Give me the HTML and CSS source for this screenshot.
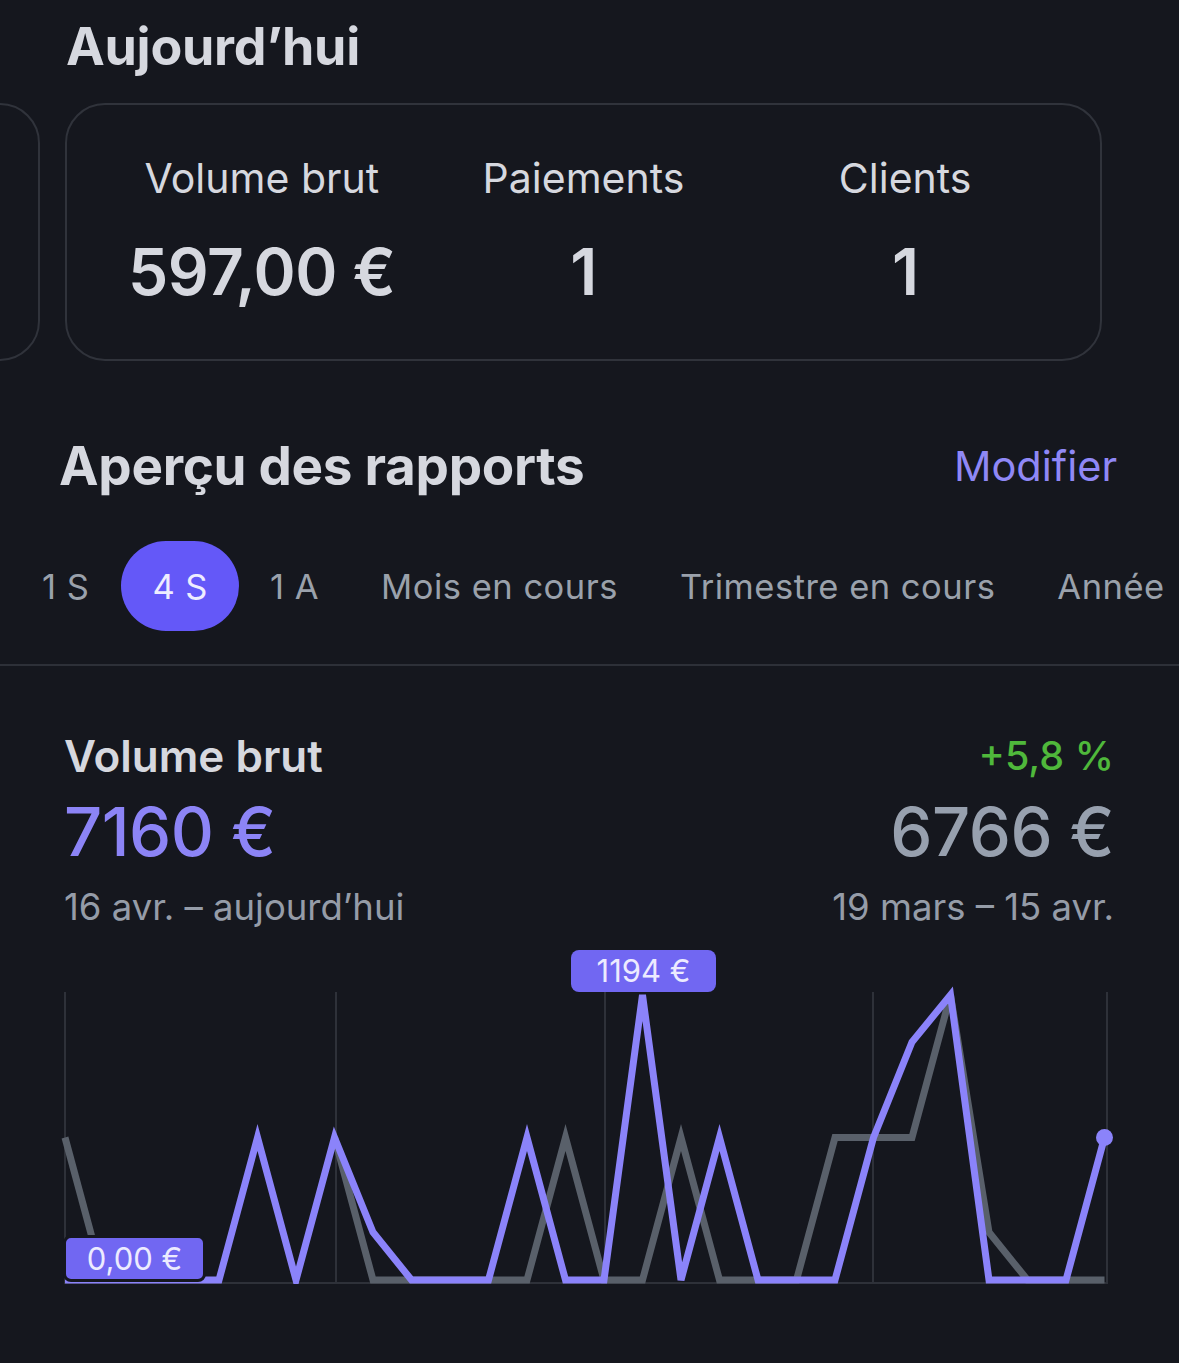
FILE: index.html
```html
<!DOCTYPE html>
<html lang="fr">
<head>
    <meta charset="UTF-8">
    <meta name="viewport" content="width=device-width, initial-scale=1.0">
    <title>Accueil</title>
    <link rel="stylesheet" href="styles.css">
</head>
<body>
    <div class="app">
        <h1 class="title today-title">Aujourd’hui</h1>

        <div class="cards">
            <div class="card card-peek"></div>
            <div class="card card-today">
                <div class="stat">
                    <p class="stat-label">Volume brut</p>
                    <p class="stat-value">597,00 €</p>
                </div>
                <div class="stat">
                    <p class="stat-label">Paiements</p>
                    <p class="stat-value">1</p>
                </div>
                <div class="stat">
                    <p class="stat-label">Clients</p>
                    <p class="stat-value">1</p>
                </div>
            </div>
        </div>

        <div class="reports-head">
            <h2 class="title">Aperçu des rapports</h2>
            <a class="edit-link">Modifier</a>
        </div>

        <div class="tabs">
            <button class="tab">1 S</button>
            <button class="tab active">4 S</button>
            <button class="tab">1 A</button>
            <button class="tab">Mois en cours</button>
            <button class="tab">Trimestre en cours</button>
            <button class="tab">Année</button>
        </div>

        <hr class="divider">

        <div class="report">
            <div class="report-row">
                <span class="report-name">Volume brut</span>
                <span class="report-delta">+5,8 %</span>
            </div>
            <div class="report-row">
                <span class="report-now">7160 €</span>
                <span class="report-prev">6766 €</span>
            </div>
            <div class="report-row">
                <span class="report-range">16 avr. – aujourd’hui</span>
                <span class="report-range">19 mars – 15 avr.</span>
            </div>
        </div>

        <div class="chart">
            <svg class="chart-svg" width="1179" height="360" viewBox="0 0 1179 360">
                <defs>
                    <clipPath id="plot-clip">
                        <rect x="0" y="0" width="1179" height="344"></rect>
                    </clipPath>
                </defs>
                <g class="grid">
                    <line x1="65" y1="52" x2="65" y2="344"></line>
                    <line x1="336" y1="52" x2="336" y2="344"></line>
                    <line x1="605" y1="52" x2="605" y2="344"></line>
                    <line x1="873" y1="52" x2="873" y2="344"></line>
                    <line x1="1107" y1="52" x2="1107" y2="344"></line>
                    <line x1="65" y1="343" x2="1107" y2="343"></line>
                </g>
                <g id="prev-lines" class="line-prev" clip-path="url(#plot-clip)"></g>
                <g id="now-lines" class="line-now" clip-path="url(#plot-clip)"></g>
                <circle id="now-dot" class="dot-now" r="8.5" cx="0" cy="0"></circle>
            </svg>
            <span class="badge badge-max">1194 €</span>
            <span class="badge badge-min">0,00 €</span>
        </div>
    </div>

    <script>
        // daily values over 4 weeks (max 1194), null = no data
        const nowValues = [0,0,0,0,0,597,0,597,200,0,0,0,597,0,0,1194,0,597,0,0,0,597,997,1194,0,0,0,597];
        const prevValues = [597,0,null,null,null,null,null,597,0,0,0,0,0,597,0,0,597,0,0,0,597,597,597,1194,200,0,0,0];

        const startX = 65, stepX = 38.5, baseY = 340, topY = 55, maxValue = 1194;
        const svgNS = "http://www.w3.org/2000/svg";

        function yFor(v) {
            return baseY - (v / maxValue) * (baseY - topY);
        }

        function drawLine(groupId, values) {
            const group = document.getElementById(groupId);
            let points = [];
            const flush = () => {
                if (points.length > 1) {
                    const line = document.createElementNS(svgNS, "polyline");
                    line.setAttribute("points", points.join(" "));
                    group.appendChild(line);
                }
                points = [];
            };
            values.forEach((v, i) => {
                if (v === null) {
                    flush();
                    return;
                }
                points.push((startX + i * stepX).toFixed(1) + "," + yFor(v).toFixed(1));
            });
            flush();
        }

        drawLine("prev-lines", prevValues);
        drawLine("now-lines", nowValues);

        const last = nowValues.length - 1;
        const dot = document.getElementById("now-dot");
        dot.setAttribute("cx", startX + last * stepX);
        dot.setAttribute("cy", yFor(nowValues[last]));
    </script>
</body>
</html>
```

FILE: styles.css
```css
*{
    margin: 0;
    padding: 0;
    box-sizing: border-box;
    font-family: Inter, "Noto Sans", sans-serif;
}
body{
    width: 100%;
    height: 100vh;
    overflow: hidden;
    background: #15171e;
    color: #d6d8df;
}
.app{
    width: 1179px;
}
.title{
    font-size: 53px;
    font-weight: 700;
    line-height: 60px;
    color: #d6d8df;
    letter-spacing: -0.3px;
}
.today-title{
    margin-top: 17px;
    padding-left: 66px;
    font-size: 52px;
}
.cards{
    display: flex;
    gap: 25px;
    margin-top: 26px;
}
.card{
    height: 258px;
    border: 2px solid #30333b;
    border-radius: 40px;
}
.card-peek{
    width: 80px;
    margin-left: -40px;
}
.card-today{
    width: 1037px;
    display: grid;
    grid-template-columns: repeat(3, 1fr);
    padding: 49px 34px 0;
}
.stat{
    text-align: center;
}
.stat-label{
    font-size: 41px;
    line-height: 48px;
    color: #d6d8df;
}
.stat-value{
    margin-top: 34px;
    font-size: 64px;
    line-height: 72px;
    font-weight: 600;
    color: #d6d8df;
    letter-spacing: -0.5px;
}
.reports-head{
    display: flex;
    justify-content: space-between;
    align-items: center;
    margin-top: 75px;
    padding: 0 62px 0 59px;
}
.edit-link{
    font-size: 41.5px;
    line-height: 60px;
    color: #8f88f6;
}
.tabs{
    display: flex;
    margin-top: 45px;
    padding-left: 11px;
    white-space: nowrap;
}
.tab{
    height: 90px;
    padding: 0 31px;
    border: none;
    border-radius: 45px;
    background: none;
    font-size: 34.5px;
    color: #9aa1ab;
    letter-spacing: 0.5px;
}
.tab.active{
    margin-left: 1px;
    background: #6458f8;
    color: #eeedff;
}
.divider{
    margin-top: 33px;
    border: none;
    height: 2px;
    background: #2d3038;
}
.report{
    margin-top: 65px;
    padding: 0 65px 0 64px;
}
.report-row{
    display: flex;
    justify-content: space-between;
    align-items: center;
}
.report-name{
    font-size: 44px;
    font-weight: 600;
    line-height: 50px;
    color: #d6d8df;
}
.report-delta{
    font-size: 39.5px;
    font-weight: 500;
    line-height: 50px;
    color: #4fb83b;
}
.report-now,
.report-prev{
    margin-top: 15px;
    font-size: 67px;
    font-weight: 500;
    line-height: 72px;
    letter-spacing: -0.5px;
}
.report-now{
    color: #8c84f6;
}
.report-prev{
    color: #97a0ae;
}
.report-range{
    margin-top: 17px;
    font-size: 36.5px;
    line-height: 44px;
    color: #959ca8;
}
.chart{
    position: relative;
    margin-top: 11px;
    height: 360px;
}
.chart-svg{
    display: block;
}
.grid line{
    stroke: #2e3139;
    stroke-width: 2;
}
.line-prev,
.line-now{
    fill: none;
    stroke-width: 7;
    stroke-linejoin: miter;
}
.line-prev{
    stroke: #59606a;
}
.line-now{
    stroke: #8b83fa;
}
.dot-now{
    fill: #8b83fa;
}
.badge{
    position: absolute;
    height: 42px;
    border-radius: 8px;
    background: #7167f2;
    color: #ecebff;
    font-size: 31px;
    line-height: 42px;
    text-align: center;
}
.badge-max{
    left: 571px;
    top: 10px;
    width: 145px;
}
.badge-min{
    left: 63px;
    top: 295px;
    width: 143px;
    height: 47px;
    border: 3px solid #15171e;
    line-height: 41px;
}
```
